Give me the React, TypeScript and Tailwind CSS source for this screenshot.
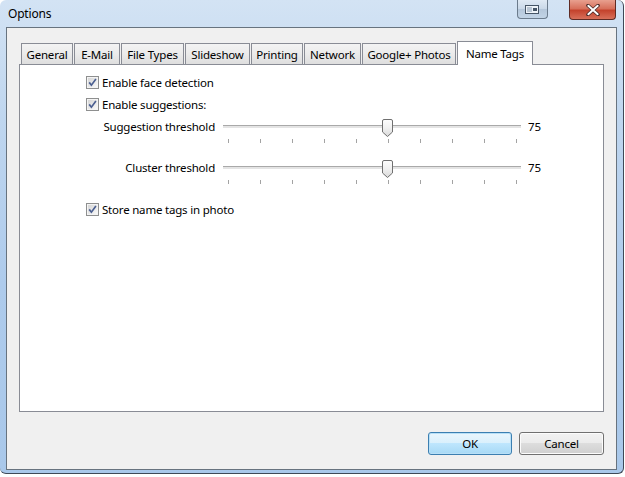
import React from 'react'

const tabs = [
  { label: 'General', cls: 'ml-[2px] w-[52px]' },
  { label: 'E-Mail', cls: 'ml-[1px] w-[46px]' },
  { label: 'File Types', cls: 'ml-[1px] w-[63px]' },
  { label: 'Slideshow', cls: 'ml-[1px] w-[65px]' },
  { label: 'Printing', cls: 'ml-[1px] w-[52px]' },
  { label: 'Network', cls: 'ml-[1px] w-[57px]' },
  { label: 'Google+ Photos', cls: 'ml-[1px] w-[94px]' },
]

function CheckBox() {
  return (
    <svg width="13" height="13" viewBox="0 0 13 13" className="shrink-0">
      <defs>
        <linearGradient id="cbfill" x1="0" y1="0" x2="1" y2="1">
          <stop offset="0" stopColor="#d6d6d6" />
          <stop offset="1" stopColor="#f8f8f8" />
        </linearGradient>
      </defs>
      <rect x="0.5" y="0.5" width="12" height="12" fill="#f4f4f4" stroke="#8e8f8f" />
      <rect x="2" y="2" width="9" height="9" fill="url(#cbfill)" />
      <path d="M3.2 6.4 L5.4 9.2 L9.9 3.1" fill="none" stroke="#4b5f91" strokeWidth="1.7" />
    </svg>
  )
}

function CheckRow({ label, extra = '' }: { label: string; extra?: string }) {
  return (
    <div className={`flex h-[22px] items-center gap-[3px] pl-[66px] ${extra}`}>
      <CheckBox />
      <span className="pt-[1px]">{label}</span>
    </div>
  )
}

function Slider() {
  const ticks = Array.from({ length: 10 }, (_, i) => 5 + i * 32)
  return (
    <svg width="298" height="41" viewBox="0 0 298 41" className="ml-[8px] shrink-0">
      <defs>
        <linearGradient id="thumb" x1="0" y1="0" x2="0" y2="1">
          <stop offset="0" stopColor="#fdfdfd" />
          <stop offset="0.5" stopColor="#f0f0f0" />
          <stop offset="1" stopColor="#d8d8d8" />
        </linearGradient>
      </defs>
      <rect x="0" y="10" width="298" height="1" fill="#a9a9a9" />
      <rect x="0" y="11" width="298" height="2" fill="#e4e4e4" />
      {ticks.map((x) => (
        <rect key={x} x={x} y="24" width="1" height="4" fill="#a3a3a3" />
      ))}
      <path
        d="M159.5 6 Q159.5 4.5 161 4.5 H168 Q169.5 4.5 169.5 6 V17 L164.5 21.5 L159.5 17 Z"
        fill="url(#thumb)"
        stroke="#6f6f6f"
      />
    </svg>
  )
}

function SliderRow({ label, extra = '' }: { label: string; extra?: string }) {
  return (
    <div className={`flex h-[41px] items-start ${extra}`}>
      <div className="flex h-[22px] w-[195px] items-center justify-end pt-[1px]">{label}</div>
      <Slider />
      <div className="ml-[7px] flex h-[22px] items-center pt-[1px]">75</div>
    </div>
  )
}

export default function App() {
  return (
    <div className="h-[477px] w-[625px] bg-white font-['Noto_Sans','DejaVu_Sans',sans-serif] text-[11.5px] leading-none tracking-[-0.2px] text-black">
      <div className="h-[474px] w-[624px] rounded-t-[6px] rounded-b-[6px] border-r border-b border-[#3f4957] bg-[linear-gradient(180deg,#d3e3f4_0%,#bfd6ef_25%,#aecbec_60%,#a9c8ea_100%)] pl-[6px]">
        {/* title bar */}
        <div className="flex h-[27px] items-start">
          <div className="pl-[2px] pt-[8px] text-[12px]">Options</div>
          <div className="ml-auto mr-[7px] flex">
            <div className="flex h-[19px] w-[31px] items-center justify-center rounded-b-[4px] border border-t-0 border-[#6b7b8c] bg-[linear-gradient(180deg,#dfe9f4_0%,#c9d8e8_50%,#b4c6da_50%,#c2d4e6_100%)]">
              <svg width="15" height="9" viewBox="0 0 15 9">
                <rect x="0.5" y="0.5" width="13" height="8" fill="#eef3f8" stroke="#465566" />
                <rect x="8" y="3" width="4" height="3" fill="#465566" />
                <rect x="2" y="2" width="5" height="5" fill="#b9c6d4" />
              </svg>
            </div>
            <div className="ml-[21px] flex h-[20px] w-[47px] items-center justify-center rounded-b-[4px] border border-t-0 border-[#5f2b24] bg-[linear-gradient(180deg,#e8a08f_0%,#d7705b_45%,#c4432d_55%,#d8705a_100%)]">
              <svg width="14" height="12" viewBox="0 0 14 12">
                <path d="M2 1.5 L12 10.5 M12 1.5 L2 10.5" stroke="#4a2a28" strokeWidth="3.6" strokeLinecap="round" />
                <path d="M2.3 1.8 L11.7 10.2 M11.7 1.8 L2.3 10.2" stroke="#ffffff" strokeWidth="2" strokeLinecap="round" />
              </svg>
            </div>
          </div>
        </div>

        {/* client area */}
        <div className="flex h-[443px] w-[611px] flex-col border border-[#67737f] bg-[#f0f0f0] pl-[12px] pt-[13px]">
          {/* tabs */}
          <div className="flex h-[23px] w-[585px] items-end">
            {tabs.map((t) => (
              <div
                key={t.label}
                className={`flex h-[21px] items-center justify-center border border-b-0 border-[#898c95] bg-[linear-gradient(180deg,#f3f3f3_0%,#ebebeb_50%,#dedede_100%)] pt-[1px] ${t.cls}`}
              >
                {t.label}
              </div>
            ))}
            <div className="relative z-10 -mb-[1px] ml-[1px] flex h-[24px] w-[76px] items-center justify-center border border-b-0 border-[#898c95] bg-white">
              Name Tags
            </div>
          </div>

          {/* panel */}
          <div className="h-[348px] w-[585px] border border-[#898c95] bg-white pt-[6px]">
            <CheckRow label="Enable face detection" />
            <CheckRow label="Enable suggestions:" />
            <SliderRow label="Suggestion threshold" />
            <SliderRow label="Cluster threshold" />
            <CheckRow label="Store name tags in photo" extra="mt-[1px]" />
          </div>

          {/* buttons */}
          <div className="mt-[20px] flex w-[585px] justify-end gap-[7px]">
            <button className="h-[23px] w-[84px] rounded-[3px] border border-[#3c7fb1] bg-[linear-gradient(180deg,#eaf6fd_0%,#d9f0fc_50%,#bee6fd_50%,#a7d9f5_100%)] pt-[1px] shadow-[inset_0_0_0_1px_#b8e0f7]">
              OK
            </button>
            <button className="h-[23px] w-[85px] rounded-[3px] border border-[#707070] bg-[linear-gradient(180deg,#f2f2f2_0%,#ebebeb_50%,#dddddd_50%,#cfcfcf_100%)] pt-[1px] shadow-[inset_0_0_0_1px_#fcfcfc]">
              Cancel
            </button>
          </div>
        </div>
      </div>
    </div>
  )
}
